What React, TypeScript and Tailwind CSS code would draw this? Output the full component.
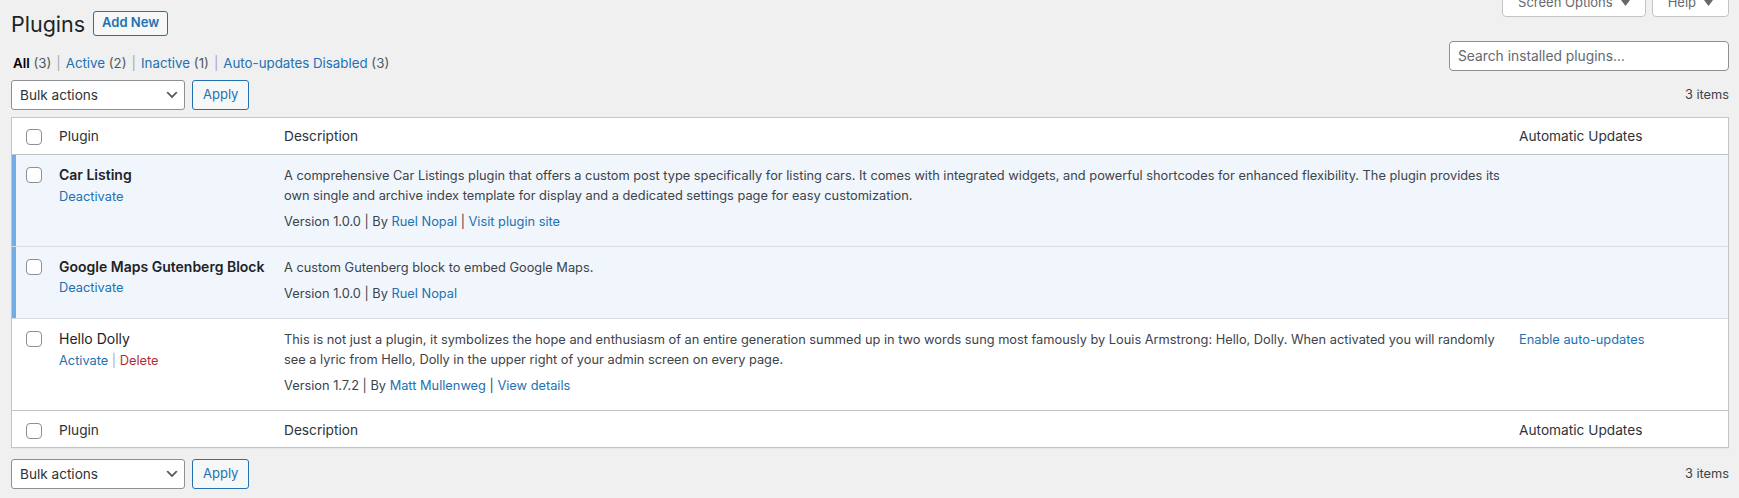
import React from 'react'

const linkCls = 'text-[#2271b1]'

function Checkbox() {
  return <span className="block w-4 h-4 rounded-[4px] border border-[#8c8f94] bg-white" />
}

function Caret() {
  return (
    <svg width="9" height="6" viewBox="0 0 9 6" className="shrink-0">
      <path d="M0 0h9L4.5 6z" fill="#646970" />
    </svg>
  )
}

function Chevron() {
  return (
    <svg width="16" height="16" viewBox="0 0 20 20" className="shrink-0">
      <path d="M5 6l5 5 5-5 2 1-7 7-7-7 2-1z" fill="#50575e" />
    </svg>
  )
}

function Sep() {
  return <span className="mx-[5px] text-[#a7aaad]">|</span>
}

function BulkBar() {
  return (
    <div className="flex items-center justify-between h-[30px]">
      <div className="flex items-center gap-[7px]">
        <div className="flex items-center justify-between w-[174px] h-[30px] pl-[8px] pr-[4px] bg-white border border-[#8c8f94] rounded-[3px] text-[13.6px] text-[#2c3338]">
          <span>Bulk actions</span>
          <Chevron />
        </div>
        <div className="flex items-center h-[30px] px-[10px] border border-[#2271b1] rounded-[3px] bg-[#f6f7f7] text-[13px] text-[#2271b1]">
          Apply
        </div>
      </div>
      <span className="text-[12.8px] text-[#3c434a]">3 items</span>
    </div>
  )
}

type Plugin = {
  name: string
  active: boolean
  desc: string[]
  version: string
  author: string
  site?: string
  auto?: string
}

const plugins: Plugin[] = [
  {
    name: 'Car Listing',
    active: true,
    desc: [
      'A comprehensive Car Listings plugin that offers a custom post type specifically for listing cars. It comes with integrated widgets, and powerful shortcodes for enhanced flexibility. The plugin provides its',
      'own single and archive index template for display and a dedicated settings page for easy customization.',
    ],
    version: '1.0.0',
    author: 'Ruel Nopal',
    site: 'Visit plugin site',
  },
  {
    name: 'Google Maps Gutenberg Block',
    active: true,
    desc: ['A custom Gutenberg block to embed Google Maps.'],
    version: '1.0.0',
    author: 'Ruel Nopal',
  },
  {
    name: 'Hello Dolly',
    active: false,
    desc: [
      'This is not just a plugin, it symbolizes the hope and enthusiasm of an entire generation summed up in two words sung most famously by Louis Armstrong: Hello, Dolly. When activated you will randomly',
      'see a lyric from Hello, Dolly in the upper right of your admin screen on every page.',
    ],
    version: '1.7.2',
    author: 'Matt Mullenweg',
    site: 'View details',
    auto: 'Enable auto-updates',
  },
]

function HeadRow({ foot }: { foot?: boolean }) {
  const border = foot ? 'border-t border-[#c3c4c7]' : 'border-b border-[#c3c4c7]'
  const pad = foot ? 'pt-[9px] pb-[7px]' : 'py-[8px]'
  const th = `text-left font-normal text-[13.7px] leading-[20px] text-[#2c3338] px-[10px] ${pad} align-top ${border}`
  return (
    <tr>
      <td className={`pl-[14px] ${foot ? 'pt-[12px]' : 'pt-[11px]'} align-top ${border}`}>
        <Checkbox />
      </td>
      <th className={th}>Plugin</th>
      <th className={th}>Description</th>
      <th className={th}>Automatic Updates</th>
    </tr>
  )
}

function PluginRow({ p, last }: { p: Plugin; last: boolean }) {
  const bg = p.active ? 'bg-[#f0f6fc]' : 'bg-white'
  const border = last ? '' : 'border-b border-[#dcdcde]'
  const pb = last ? 'pb-[14.5px]' : 'pb-[14px]'
  const pt = last ? 'pt-[11.5px]' : 'pt-[11px]'
  return (
    <tr className={bg}>
      <td
        className={`pl-[14px] pt-[12px] align-top ${border} ${p.active ? 'shadow-[inset_4px_0_0_#72aee6]' : ''}`}
      >
        <Checkbox />
      </td>
      <td className={`pl-[10px] pr-[12px] ${last ? 'pt-[10.5px]' : 'pt-[10px]'} align-top whitespace-nowrap ${border}`}>
        <div className={`text-[14px] leading-[19.5px] text-[#1d2327] ${p.active ? 'font-semibold' : ''}`}>{p.name}</div>
        <div className="mt-[2px] text-[12.8px] leading-[19.5px]">
          {p.active ? (
            <span className={linkCls}>Deactivate</span>
          ) : (
            <>
              <span className={linkCls}>Activate</span>
              <span className="text-[#a7aaad]"> | </span>
              <span className="text-[#b32d2e]">Delete</span>
            </>
          )}
        </div>
      </td>
      <td className={`px-[10px] ${pt} ${pb} align-top text-[12.8px] leading-[19.5px] text-[#3c434a] ${border}`}>
        <p className="whitespace-nowrap">
          {p.desc.map((l, i) => (
            <span key={i} className="block">
              {l}
            </span>
          ))}
        </p>
        <div className="mt-[7px] whitespace-nowrap">
          Version {p.version} | By <span className={linkCls}>{p.author}</span>
          {p.site && (
            <>
              {' '}| <span className={linkCls}>{p.site}</span>
            </>
          )}
        </div>
      </td>
      <td className={`px-[10px] ${pt} align-top text-[12.8px] leading-[19.5px] ${border}`}>
        {p.auto && <span className={linkCls}>{p.auto}</span>}
      </td>
    </tr>
  )
}

export default function App() {
  return (
    <div className="min-h-screen bg-[#f0f0f1] font-['Inter',sans-serif] text-[13px] text-[#3c434a] overflow-hidden">
      <div className="pl-[11px] pr-[10px]">
        {/* Title + screen meta */}
        <div className="flex items-start justify-between">
          <div className="flex items-center h-[30px] mt-[8px]">
            <h1 className="mt-[1px] text-[21.5px] leading-[30px] font-normal text-[#1d2327]">Plugins</h1>
            <span className="ml-[8px] px-[8px] h-[25px] flex items-center border border-[#2271b1] rounded-[3px] bg-[#f6f7f7] text-[13px] font-semibold text-[#2271b1]">
              Add New
            </span>
          </div>
          <div className="flex gap-[6px] -mt-[11px]">
            <div className="flex items-center gap-[8px] h-[28px] pl-[15px] pr-[15px] bg-white border border-[#c3c4c7] rounded-b-[4px] text-[13px] text-[#646970]">
              Screen Options <Caret />
            </div>
            <div className="flex items-center gap-[8px] h-[28px] pl-[15px] pr-[15px] bg-white border border-[#c3c4c7] rounded-b-[4px] text-[13px] text-[#646970]">
              Help <Caret />
            </div>
          </div>
        </div>

        {/* Filters + search */}
        <div className="flex items-start justify-between mt-[3px]">
          <div className="pt-[12px] pl-[2px] leading-[20px] text-[13.3px] text-[#50575e] whitespace-pre">
            <span className="font-semibold text-black">All</span> (3)
            <Sep />
            <span className={linkCls}>Active</span> (2)
            <Sep />
            <span className={linkCls}>Inactive</span> (1)
            <Sep />
            <span className={linkCls}>Auto-updates Disabled</span> (3)
          </div>
          <div className="flex items-center w-[280px] h-[30px] px-[8px] bg-white border border-[#8c8f94] rounded-[4px] text-[13.8px] text-[#646970]">
            Search installed plugins...
          </div>
        </div>

        <div className="mt-[7px]">
          <BulkBar />
        </div>

        {/* Table */}
        <div className="mt-[7px] bg-white border border-[#c3c4c7] shadow-[0_1px_1px_rgba(0,0,0,0.04)]">
          <table className="w-full table-fixed border-separate border-spacing-0">
            <colgroup>
              <col className="w-[37px]" />
              <col className="w-[225px]" />
              <col />
              <col className="w-[219px]" />
            </colgroup>
            <thead>
              <HeadRow />
            </thead>
            <tbody>
              {plugins.map((p, i) => (
                <PluginRow key={p.name} p={p} last={i === plugins.length - 1} />
              ))}
            </tbody>
            <tfoot>
              <HeadRow foot />
            </tfoot>
          </table>
        </div>

        <div className="mt-[11px]">
          <BulkBar />
        </div>
      </div>
    </div>
  )
}
